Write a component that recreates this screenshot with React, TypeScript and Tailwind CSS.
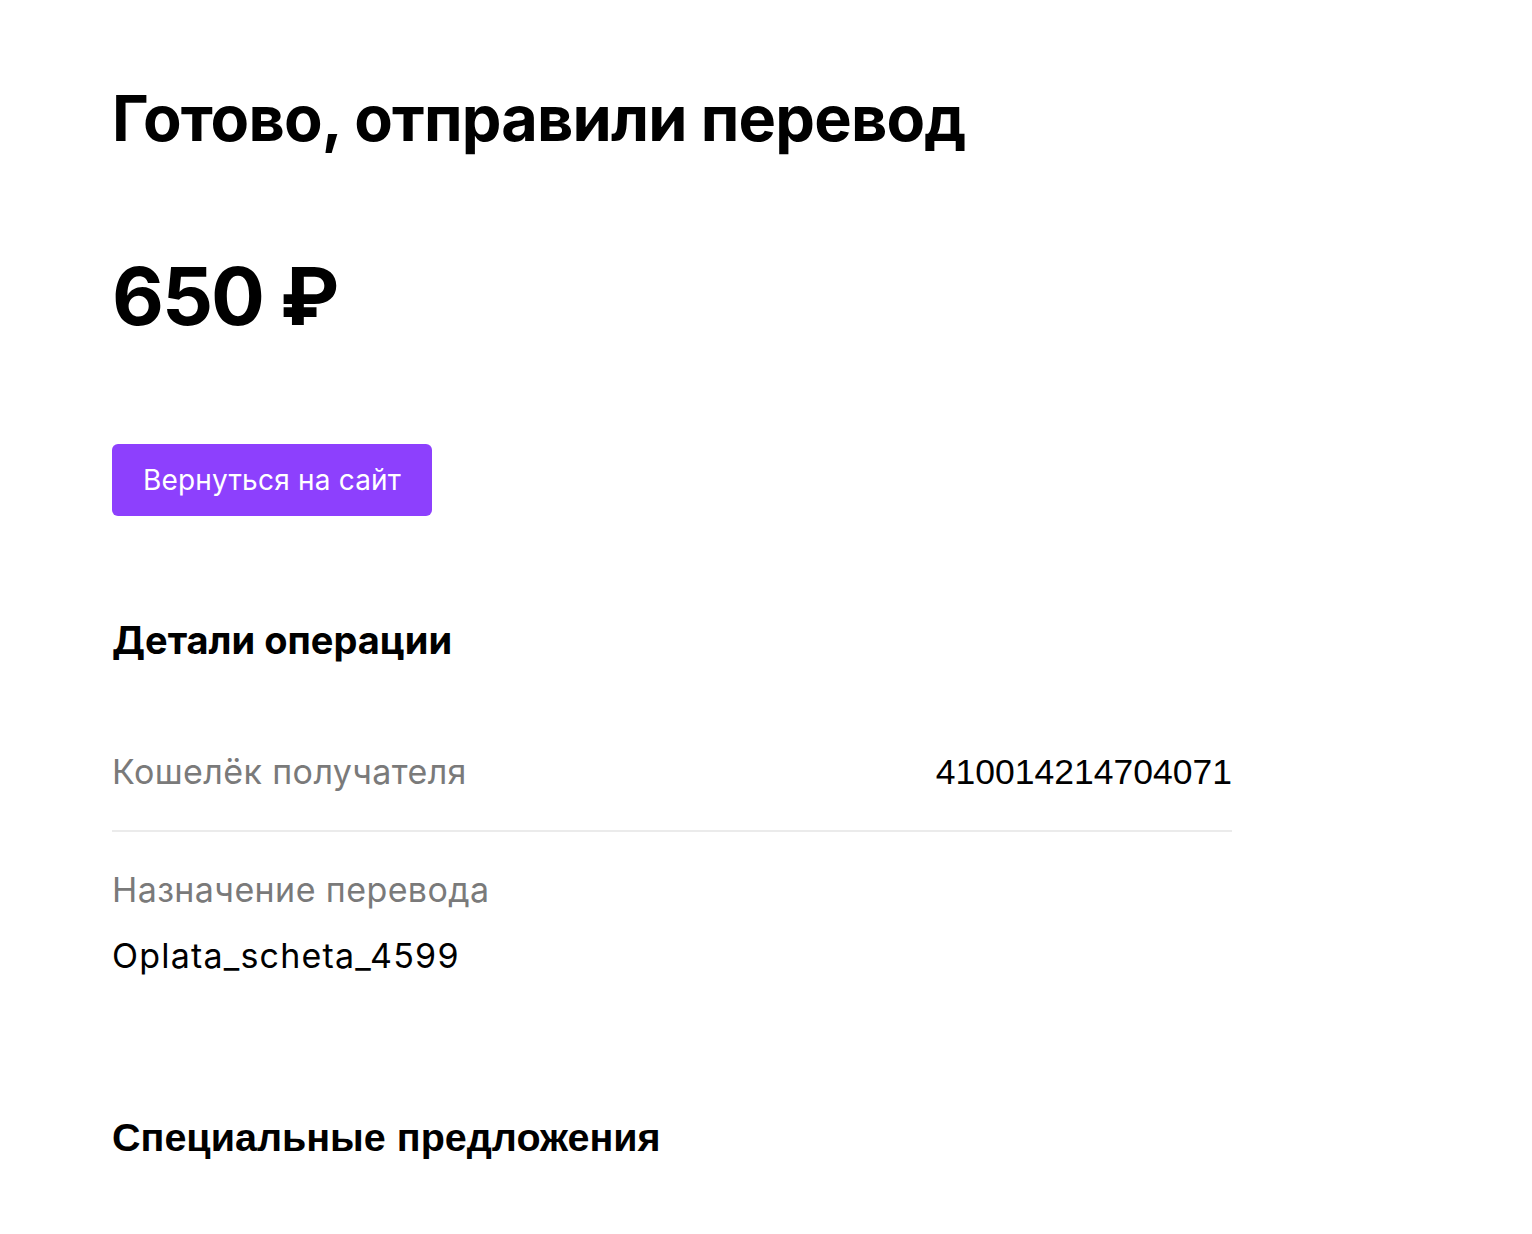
export default function App() {
  const geo = { fontFamily: "Inter, 'Noto Sans', sans-serif" };
  const arial = { fontFamily: "'Liberation Sans', Arial, sans-serif" };
  return (
    <div className="min-h-[1234px] bg-white text-black" style={geo}>
      <div className="w-[1120px] ml-[112px] pt-[78px]">
        <h1 className="text-[63px] leading-[80px] font-bold tracking-[-0.8px]">Готово, отправили перевод</h1>
        <div className="mt-[88px] text-[80px] leading-[100px] font-bold tracking-[-2px]">650 ₽</div>
        <button className="mt-[98px] h-[72px] w-[320px] rounded-[6px] bg-[#8d40fd] text-white text-[28px] tracking-[0.2px]">Вернуться на сайт</button>
        <h2 className="mt-[100px] text-[38px] leading-[48px] font-bold">Детали операции</h2>
        <div className="mt-[81px] flex justify-between items-center h-[56px]">
          <span className="text-[#7a7a7a] text-[34px] tracking-[0.4px] -translate-y-[2px]">Кошелёк получателя</span>
          <span className="text-[35.5px]" style={arial}>410014214704071</span>
        </div>
        <div className="mt-[29px] border-t-2 border-[#ebebeb]" />
        <div className="mt-[30px] text-[34px] leading-[56px] text-[#7a7a7a] tracking-[0.4px]">Назначение перевода</div>
        <div className="mt-[10px] text-[34px] leading-[56px] tracking-[1.2px]">Oplata_scheta_4599</div>
        <h2 className="mt-[129px] text-[39.5px] leading-[48px] font-bold" style={arial}>Специальные предложения</h2>
      </div>
    </div>
  );
}
